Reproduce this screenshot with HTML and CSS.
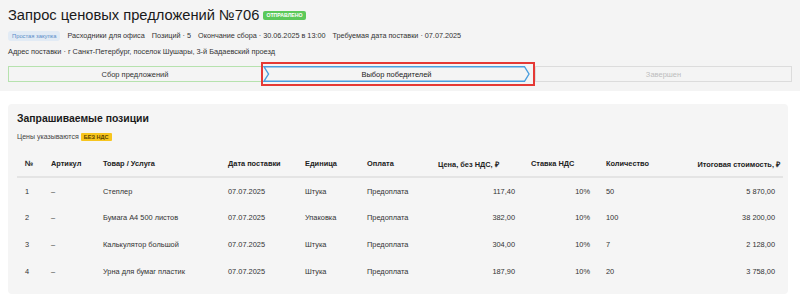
FILE: index.html
```html
<!DOCTYPE html>
<html lang="ru">
<head>
<meta charset="utf-8">
<title>Запрос ценовых предложений №706</title>
<link rel="stylesheet" href="styles.css">
</head>
<body>
<header class="top">
  <h1 class="title">Запрос ценовых предложений №706 <span class="status">ОТПРАВЛЕНО</span></h1>
  <div class="meta">
    <span class="tag">Простая закупка</span>
    <span>Расходники для офиса</span>
    <span>Позиций · 5</span>
    <span>Окончание сбора · 30.06.2025 в 13:00</span>
    <span>Требуемая дата поставки · 07.07.2025</span>
  </div>
  <div class="address">Адрес поставки · г Санкт-Петербург, поселок Шушары, 3-й Бадаевский проезд</div>
  <div class="steps">
    <div class="step done">Сбор предложений</div>
    <div class="step-frame">
      <div class="step current">
        <svg class="chev" viewBox="0 0 267 16" preserveAspectRatio="none" aria-hidden="true"><polygon points="1,0.75 261.5,0.75 266,8 261.5,15.25 1,15.25 5.5,8" fill="none" stroke="#4a9ede" stroke-width="1.4"/></svg>
        <span class="step-label">Выбор победителей</span>
      </div>
    </div>
    <div class="step todo">Завершен</div>
  </div>
</header>
<main class="card">
  <h2 class="card-title">Запрашиваемые позиции</h2>
  <div class="vat-note">Цены указываются <span class="vat">БЕЗ НДС</span></div>
  <table class="items">
    <colgroup>
      <col class="c1"><col class="c2"><col class="c3"><col class="c4"><col class="c5">
      <col class="c6"><col class="c7"><col class="c8"><col class="c9"><col class="c10">
    </colgroup>
    <thead>
      <tr>
        <th>№</th><th>Артикул</th><th>Товар / Услуга</th><th>Дата поставки</th><th>Единица</th>
        <th>Оплата</th><th class="price-h">Цена, без НДС, ₽</th><th>Ставка НДС</th><th>Количество</th><th class="num total-h">Итоговая стоимость, ₽</th>
      </tr>
    </thead>
    <tbody>
      <tr><td>1</td><td>–</td><td>Степлер</td><td>07.07.2025</td><td>Штука</td><td>Предоплата</td><td class="num">117,40</td><td class="num">10%</td><td>50</td><td class="num">5 870,00</td></tr>
      <tr><td>2</td><td>–</td><td>Бумага А4 500 листов</td><td>07.07.2025</td><td>Упаковка</td><td>Предоплата</td><td class="num">382,00</td><td class="num">10%</td><td>100</td><td class="num">38 200,00</td></tr>
      <tr><td>3</td><td>–</td><td>Калькулятор большой</td><td>07.07.2025</td><td>Штука</td><td>Предоплата</td><td class="num">304,00</td><td class="num">10%</td><td>7</td><td class="num">2 128,00</td></tr>
      <tr><td>4</td><td>–</td><td>Урна для бумаг пластик</td><td>07.07.2025</td><td>Штука</td><td>Предоплата</td><td class="num">187,90</td><td class="num">10%</td><td>20</td><td class="num">3 758,00</td></tr>
    </tbody>
  </table>
</main>
</body>
</html>
```

FILE: styles.css
```css
* { box-sizing: border-box; }
html, body { margin: 0; padding: 0; background: #fff; }
body {
  font-family: "Liberation Sans", Arial, sans-serif;
  color: #2a2a2a;
  width: 800px;
  height: 304px;
  overflow: hidden;
}
.top {
  background: #f4f4f4;
  padding: 4px 8px 5px 8px;
  height: 91px;
}
.title {
  margin: 0;
  font-size: 14.7px;
  font-weight: normal;
  line-height: 22px;
  color: #1a1a1a;
  display: flex;
  align-items: center;
  gap: 4px;
}
.status {
  background: #5cc95a;
  color: #fff;
  font-size: 5.2px;
  font-weight: bold;
  line-height: 9px;
  padding: 0 3px;
  border-radius: 2px;
}
.meta {
  margin-top: 4px;
  display: flex;
  align-items: center;
  gap: 7px;
  font-size: 7.25px;
  line-height: 12px;
  color: #333;
}
.tag {
  background: #e2ebf5;
  color: #5a8cc8;
  font-size: 5.8px;
  line-height: 10px;
  padding: 0 4px;
  border-radius: 3px;
}
.address {
  margin-top: 4px;
  font-size: 7.35px;
  line-height: 12px;
  color: #333;
}
.steps {
  margin-top: 4px;
  display: grid;
  grid-template-columns: 253px 274px 1fr;
  align-items: center;
  font-size: 7.5px;
}
.step {
  height: 16px;
  display: flex;
  align-items: center;
  justify-content: center;
}
.step.done {
  border: 1px solid #b6e2ae;
  border-right: none;
  color: #333;
}
.step-frame {
  border: 2px solid #e53935;
  height: 24px;
  padding: 2px 3px 2px 0;
}
.step.current {
  position: relative;
  color: #222;
}
.chev {
  position: absolute;
  left: 0; top: 0;
  width: 100%;
  height: 100%;
}
.step-label { position: relative; }
.step.todo {
  border: 1px solid #dcdcdc;
  color: #bdbdbd;
}
.card {
  margin: 13px 12px 0 8px;
  background: #f5f5f5;
  border-radius: 4px;
  padding: 7px 5px 9px 9px;
}
.card-title {
  margin: 0;
  font-size: 10.4px;
  line-height: 16px;
  font-weight: bold;
  color: #1a1a1a;
}
.vat-note {
  margin-top: 4px;
  font-size: 7px;
  line-height: 12px;
  color: #444;
  display: flex;
  align-items: center;
  gap: 2px;
}
.vat {
  background: #f7c51e;
  color: #5a4200;
  font-weight: bold;
  font-size: 5.6px;
  line-height: 8px;
  padding: 0 3px;
  border-radius: 1px;
}
.items {
  margin-top: 8px;
  width: 766px;
  table-layout: fixed;
  border-collapse: collapse;
  font-size: 7.4px;
}
.c1 { width: 26px; }
.c2 { width: 52px; }
.c3 { width: 125px; }
.c4 { width: 77px; }
.c5 { width: 62px; }
.c6 { width: 71px; }
.c7 { width: 93px; }
.c8 { width: 75px; }
.c9 { width: 82px; }
.c10 { width: 103px; }
.items th {
  text-align: left;
  font-weight: bold;
  color: #222;
  height: 26px;
  padding: 0 8px;
  border-bottom: 2px solid #e4e4e4;
  white-space: nowrap;
}
.items th.price-h { text-align: right; padding-right: 31px; }
.items th.total-h { padding-right: 3px; }
.items td {
  height: 27px;
  padding: 0 8px;
  color: #333;
  white-space: nowrap;
}
.items .num { text-align: right; }
```
